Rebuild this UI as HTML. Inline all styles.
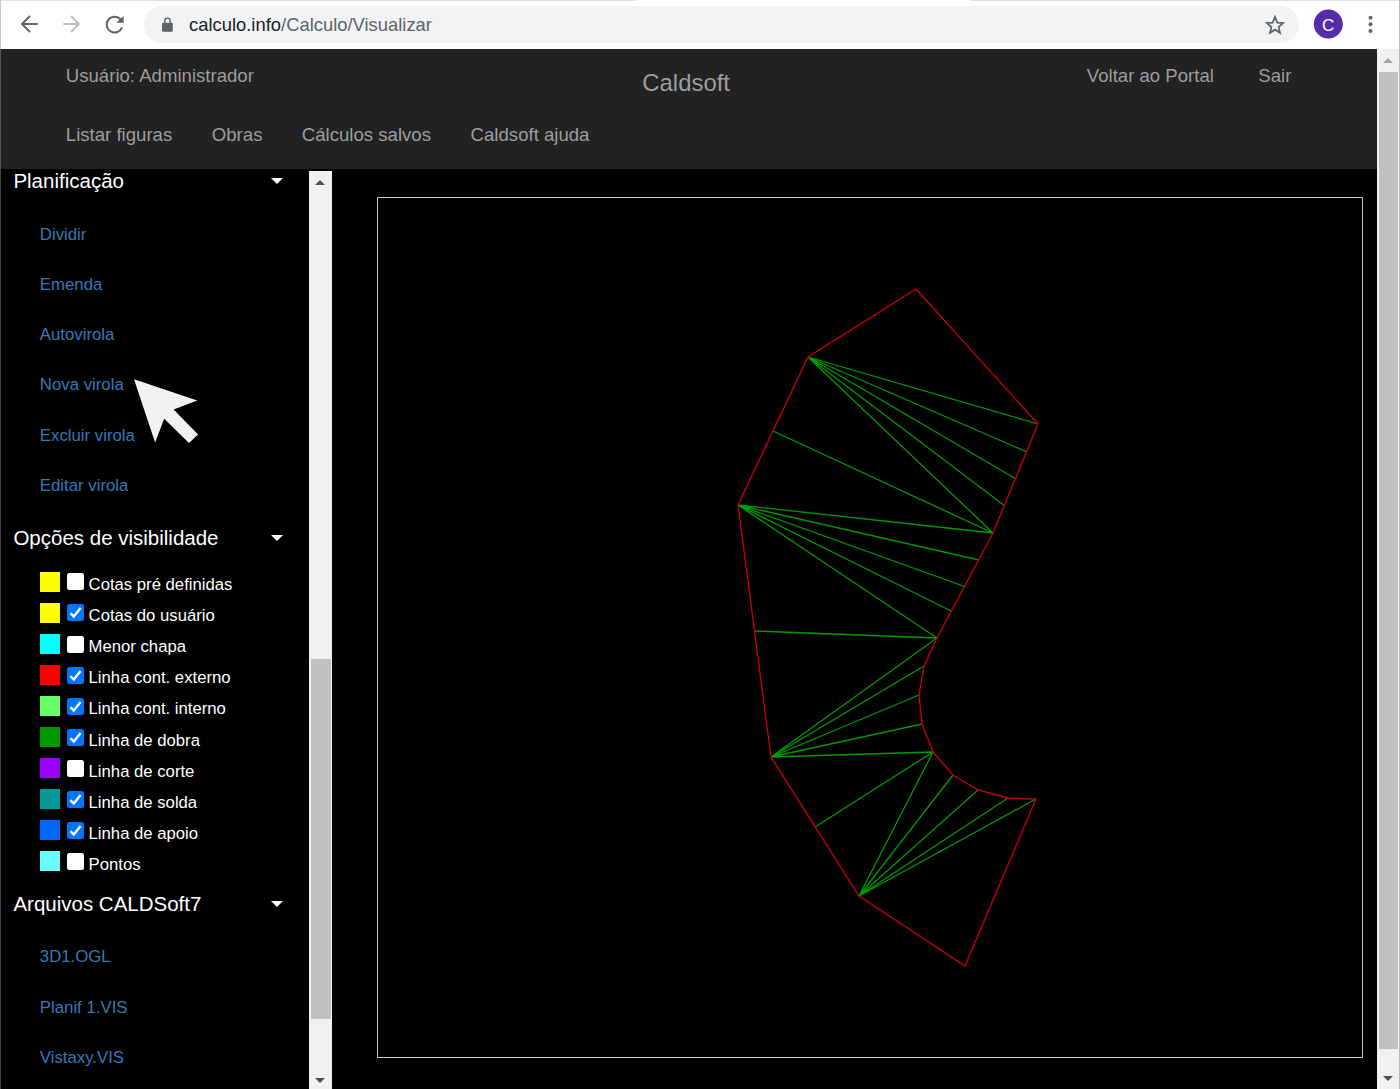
<!DOCTYPE html>
<html><head><meta charset="utf-8">
<style>
html,body{margin:0;padding:0;width:1400px;height:1089px;overflow:hidden;background:#000;}
body{position:relative;font-family:"Liberation Sans",sans-serif;}
.a{position:absolute;}
.t{position:absolute;line-height:1;white-space:nowrap;}
#toolbar{left:0;top:0;width:1400px;height:49px;background:#fff;}
#omni{left:144px;top:6px;width:1155px;height:37px;border-radius:18.5px;background:#f1f3f4;}
#hdr{left:0;top:49px;width:1377px;height:120px;background:#222;}
.nav{color:#9d9d9d;font-size:18.4px;}
.side-h{color:#fff;font-size:20.1px;}
.lnk{color:#3a7dc2;font-size:16.5px;}
.row{color:#fff;font-size:16.5px;}
.sw{position:absolute;left:40px;width:20px;height:20px;}
.cb{position:absolute;left:67px;width:17px;height:17px;border-radius:2.5px;background:#fff;}
.cb.on{background:#0075ff;}
.tri{position:absolute;width:0;height:0;border-left:6px solid transparent;border-right:6px solid transparent;border-top:6px solid #fff;}
</style></head><body>
<!-- Chrome toolbar -->
<div id="toolbar" class="a">
  <div class="a" style="left:0;top:0;width:636px;height:1px;background:#dee1e6"></div><div class="a" style="left:970px;top:0;width:430px;height:1px;background:#dee1e6"></div>
  <div id="omni" class="a"></div>
  <svg class="a" style="left:0;top:0" width="1400" height="49">
    <!-- back -->
    <g stroke="#5f6368" stroke-width="2" fill="none" stroke-linecap="round" stroke-linejoin="round">
      <path d="M37 24 H22 M29.5 16.5 L22 24 L29.5 31.5"/>
    </g>
    <g stroke="#bdc1c6" stroke-width="2" fill="none" stroke-linecap="round" stroke-linejoin="round">
      <path d="M64 24 H79 M71.5 16.5 L79 24 L71.5 31.5"/>
    </g>
    <!-- reload -->
    <g fill="none" stroke="#5f6368" stroke-width="2">
      <path d="M120.65 19.52 A7.9 7.9 0 1 0 122.0 27.3"/>
    </g>
    <path d="M116.3 22.7 L123.7 22.7 L123.7 15.9 Z" fill="#5f6368"/>
    <!-- lock -->
    <rect x="162" y="22.8" width="10.8" height="8.9" rx="1.1" fill="#5f6368"/>
    <path d="M164.8 23.2 v-2.45 a2.65 2.65 0 0 1 5.3 0 v2.45" fill="none" stroke="#5f6368" stroke-width="1.4"/>
    <!-- star -->
    <path transform="translate(1275 24.6) scale(0.92 0.96) translate(-1275 -24)" d="M1275 16 L1277.4 21.9 L1283.8 22.4 L1278.9 26.5 L1280.4 32.6 L1275 29.3 L1269.6 32.6 L1271.1 26.5 L1266.2 22.4 L1272.6 21.9 Z" fill="none" stroke="#5f6368" stroke-width="1.9" stroke-linejoin="miter"/>
    <!-- avatar -->
    <circle cx="1328.3" cy="24.1" r="14.5" fill="#562da9"/>
    <!-- dots -->
    <circle cx="1370.5" cy="17.7" r="2" fill="#5f6368"/>
    <circle cx="1370.5" cy="24.2" r="2" fill="#5f6368"/>
    <circle cx="1370.5" cy="30.9" r="2" fill="#5f6368"/>
  </svg>
  <div class="t" style="left:189px;top:16px;font-size:18.4px;color:#202124">calculo.info<span style="color:#5f6368">/Calculo/Visualizar</span></div>
  <div class="t" style="left:1322px;top:17px;font-size:17px;color:#fff">C</div>
  <div class="a" style="left:1399px;top:0;width:1px;height:1089px;background:#bbb"></div>
  <div class="a" style="left:0;top:0;width:1px;height:49px;background:#c8c8c8"></div>
</div>

<!-- header -->
<div id="hdr" class="a">
  <div class="a" style="left:0;top:0;width:1px;height:119px;background:#555"></div>
</div>
<div class="a" style="left:0;top:168px;width:1px;height:921px;background:#444"></div>
<div class="t" style="left:65.8px;top:67px;font-size:18.6px;color:#9d9d9d;">Usuário: Administrador</div>
<div class="t" style="left:642.3px;top:71px;font-size:23.9px;color:#9d9d9d;">Caldsoft</div>
<div class="t" style="left:1086.8px;top:67px;font-size:18.6px;color:#9d9d9d;">Voltar ao Portal</div>
<div class="t" style="left:1258.3px;top:67px;font-size:18.6px;color:#9d9d9d;">Sair</div>
<div class="t" style="left:65.8px;top:126px;font-size:18.6px;color:#9d9d9d;">Listar figuras</div>
<div class="t" style="left:211.8px;top:126px;font-size:18.6px;color:#9d9d9d;">Obras</div>
<div class="t" style="left:301.8px;top:126px;font-size:18.6px;color:#9d9d9d;">Cálculos salvos</div>
<div class="t" style="left:470.6px;top:126px;font-size:18.6px;color:#9d9d9d;">Caldsoft ajuda</div>
<div class="t" style="left:13.4px;top:171px;font-size:20.5px;color:#fff;">Planificação</div>
<div class="tri" style="left:271px;top:178px"></div>
<div class="t" style="left:13.4px;top:528px;font-size:20.5px;color:#fff;">Opções de visibilidade</div>
<div class="tri" style="left:271px;top:535px"></div>
<div class="t" style="left:13.4px;top:894px;font-size:20.5px;color:#fff;">Arquivos CALDSoft7</div>
<div class="tri" style="left:271px;top:901px"></div>
<div class="t" style="left:39.8px;top:227px;font-size:16.8px;color:#337ab7;">Dividir</div>
<div class="t" style="left:39.8px;top:277px;font-size:16.8px;color:#337ab7;">Emenda</div>
<div class="t" style="left:39.8px;top:327px;font-size:16.8px;color:#337ab7;">Autovirola</div>
<div class="t" style="left:39.8px;top:377px;font-size:16.8px;color:#337ab7;">Nova virola</div>
<div class="t" style="left:39.8px;top:428px;font-size:16.8px;color:#337ab7;">Excluir virola</div>
<div class="t" style="left:39.8px;top:478px;font-size:16.8px;color:#337ab7;">Editar virola</div>
<div class="t" style="left:39.8px;top:949px;font-size:16.8px;color:#337ab7;">3D1.OGL</div>
<div class="t" style="left:39.8px;top:1000px;font-size:16.8px;color:#337ab7;">Planif 1.VIS</div>
<div class="t" style="left:39.8px;top:1050px;font-size:16.8px;color:#337ab7;">Vistaxy.VIS</div>
<div class="sw" style="top:571.50px;background:#ffff00"></div>
<div class="cb" style="top:573.30px"></div>
<div class="t" style="left:88.6px;top:577px;font-size:16.7px;color:#fff;">Cotas pré definidas</div>
<div class="sw" style="top:602.61px;background:#ffff00"></div>
<div class="cb on" style="top:604.41px"><svg width="17" height="17" style="position:absolute;left:0;top:0"><path d="M3.4 9.1 L6.8 12.5 L13.6 4" fill="none" stroke="#fff" stroke-width="2.4"/></svg></div>
<div class="t" style="left:88.6px;top:608px;font-size:16.7px;color:#fff;">Cotas do usuário</div>
<div class="sw" style="top:633.72px;background:#00ffff"></div>
<div class="cb" style="top:635.52px"></div>
<div class="t" style="left:88.6px;top:639px;font-size:16.7px;color:#fff;">Menor chapa</div>
<div class="sw" style="top:664.83px;background:#ff0000"></div>
<div class="cb on" style="top:666.63px"><svg width="17" height="17" style="position:absolute;left:0;top:0"><path d="M3.4 9.1 L6.8 12.5 L13.6 4" fill="none" stroke="#fff" stroke-width="2.4"/></svg></div>
<div class="t" style="left:88.6px;top:670px;font-size:16.7px;color:#fff;">Linha cont. externo</div>
<div class="sw" style="top:695.94px;background:#66ff66"></div>
<div class="cb on" style="top:697.74px"><svg width="17" height="17" style="position:absolute;left:0;top:0"><path d="M3.4 9.1 L6.8 12.5 L13.6 4" fill="none" stroke="#fff" stroke-width="2.4"/></svg></div>
<div class="t" style="left:88.6px;top:701px;font-size:16.7px;color:#fff;">Linha cont. interno</div>
<div class="sw" style="top:727.05px;background:#009900"></div>
<div class="cb on" style="top:728.85px"><svg width="17" height="17" style="position:absolute;left:0;top:0"><path d="M3.4 9.1 L6.8 12.5 L13.6 4" fill="none" stroke="#fff" stroke-width="2.4"/></svg></div>
<div class="t" style="left:88.6px;top:733px;font-size:16.7px;color:#fff;">Linha de dobra</div>
<div class="sw" style="top:758.16px;background:#9900ff"></div>
<div class="cb" style="top:759.96px"></div>
<div class="t" style="left:88.6px;top:764px;font-size:16.7px;color:#fff;">Linha de corte</div>
<div class="sw" style="top:789.27px;background:#009999"></div>
<div class="cb on" style="top:791.07px"><svg width="17" height="17" style="position:absolute;left:0;top:0"><path d="M3.4 9.1 L6.8 12.5 L13.6 4" fill="none" stroke="#fff" stroke-width="2.4"/></svg></div>
<div class="t" style="left:88.6px;top:795px;font-size:16.7px;color:#fff;">Linha de solda</div>
<div class="sw" style="top:820.38px;background:#0066ff"></div>
<div class="cb on" style="top:822.18px"><svg width="17" height="17" style="position:absolute;left:0;top:0"><path d="M3.4 9.1 L6.8 12.5 L13.6 4" fill="none" stroke="#fff" stroke-width="2.4"/></svg></div>
<div class="t" style="left:88.6px;top:826px;font-size:16.7px;color:#fff;">Linha de apoio</div>
<div class="sw" style="top:851.49px;background:#66ffff"></div>
<div class="cb" style="top:853.29px"></div>
<div class="t" style="left:88.6px;top:857px;font-size:16.7px;color:#fff;">Pontos</div>
<!-- sidebar scrollbar -->
<div class="a" style="left:309px;top:171px;width:23px;height:918px;background:#f1f1f1"></div>
<div class="a" style="left:311px;top:659px;width:20px;height:360px;background:#c1c1c1"></div>
<div class="a" style="left:315px;top:180px;width:0;height:0;border-left:5.5px solid transparent;border-right:5.5px solid transparent;border-bottom:5.5px solid #505050"></div>
<div class="a" style="left:315px;top:1078px;width:0;height:0;border-left:5.5px solid transparent;border-right:5.5px solid transparent;border-top:5.5px solid #505050"></div>

<!-- page scrollbar -->
<div class="a" style="left:1377px;top:49px;width:22px;height:1040px;background:#f1f1f1"></div>
<div class="a" style="left:1379px;top:72px;width:19px;height:977px;background:#c1c1c1"></div>
<div class="a" style="left:1382.5px;top:58px;width:0;height:0;border-left:5.5px solid transparent;border-right:5.5px solid transparent;border-bottom:5.5px solid #a3a3a3"></div>
<div class="a" style="left:1382.5px;top:1076px;width:0;height:0;border-left:5.5px solid transparent;border-right:5.5px solid transparent;border-top:5.5px solid #505050"></div>

<!-- canvas -->
<svg class="a" style="left:0;top:0" width="1400" height="1089" shape-rendering="crispEdges">
  <rect x="377.5" y="197.5" width="985" height="860" fill="none" stroke="#c8c8c8" stroke-width="1"/>
</svg>
<svg id="draw" class="a" style="left:0;top:0" width="1400" height="1089">
  <g fill="none" stroke="#009a00" stroke-width="1.3">
    <path d="M808 357 L1038 424 M808 357 L1027 452 M808 357 L1016 479 M808 357 L1005 506 M808 357 L993 533 M773 431 L993 533
             M738 505 L993 533 M738 505 L979 560 M738 505 L966 587 M738 505 L951 611 M738 505 L937 638 M755 631 L937 638
             M771 757 L937 638 M771 757 L924 666 M771 757 L919 695 M771 757 L922 724 M771 757 L933 752 M815 827 L933 752
             M859 896 L933 752 M859 896 L953 775 M859 896 L978 790 M859 896 L1008 798 M859 896 L1036 799"/>
  </g>
  <path d="M916 289 L1038 424 L993 533 L937 638 L924 666 L919 695 L922 724 L933 752 L953 775 L978 790 L1008 798 L1036 799 L965 966 L859 896 L771 757 L738 505 L808 357 Z" fill="none" stroke="#cc0000" stroke-width="1.3"/>
</svg>

<!-- cursor -->
<svg class="a" style="left:0;top:0" width="1400" height="1089">
  <path d="M134 379.2 L197.3 400.4 L173.6 409.6 L198.1 434.4 L189 442.9 L164.2 418.7 L155.1 442.5 Z" fill="#f2f2f2"/>
</svg>
</body></html>
